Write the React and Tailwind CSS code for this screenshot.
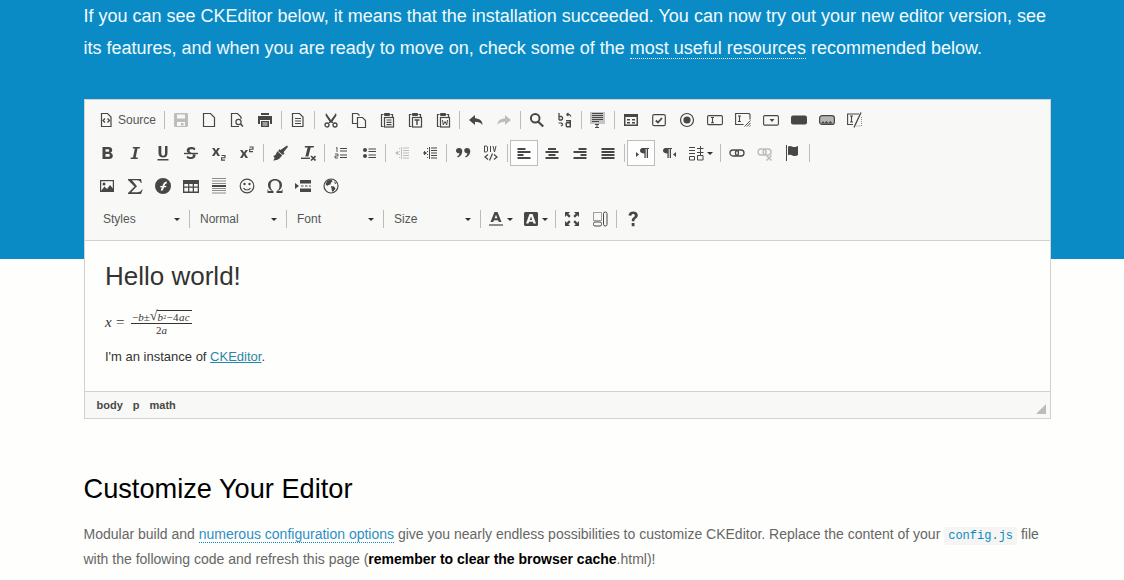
const Ic = ({ children, c = "#474747", w = 16, h = 16 }) => (
  <svg width={w} height={h} viewBox={`0 0 ${w} ${h}`} fill={c} stroke="none">
    {children}
  </svg>
);

const S = ({ d, c = "#474747", w = 1.2 }) => <path d={d} fill="none" stroke={c} strokeWidth={w} />;

const icons = {
  source: <><S d="M3.500 1.500h6l3.500 3.500v9.500h-9.500z" /><S d="M7 6.500l-2 2 2 2M9.500 6.500l2 2-2 2" w={1.300} /></>,
  save: <path fillRule="evenodd" d="M2 1h12l1 1v12l-1 1H2l-1-1V2zM4 2.500v4h8v-4zM4 10v4h8v-4zM8 11h2.500v2.500H8z" fill="#bdbdbd" />,
  newpage: <S d="M2.500 1.500h7l4 4v9h-11z" />,
  preview: <><S d="M10 14.500H2.500v-13h6l3.500 3.500v2" /><circle cx="9.500" cy="10" r="2.600" fill="none" stroke="#474747" strokeWidth="1.200" /><S d="M11.500 12l2.500 2.500" w={1.600} /></>,
  print: <path fillRule="evenodd" d="M4 1h8v2H4zM1 4h14v8h-2V8H3v4H1zM4 9h8v6H4zM5.500 10.500v1h5v-1zM5.500 12.500v1h5v-1z" />,
  templates: <><S d="M2.500 1.500h7l3.500 3.500v9.500H2.500z" /><S d="M5 6.500h6M5 9h6M5 11.500h6" /></>,
  cut: <><path d="M3 1l5 7 5-7 .5 2.500L9.500 9.500l1 1.500h-2L8 10l-.5 1h-2l1-1.500L2.500 3.500z" /><circle cx="4" cy="13" r="2" fill="none" stroke="#474747" strokeWidth="1.300" /><circle cx="12" cy="13" r="2" fill="none" stroke="#474747" strokeWidth="1.300" /></>,
  copy: <><S d="M6 11.500H1.500v-10h5l2 2" /><path d="M6.500 5.500h5l3 3v7h-8z" fill="#f8f8f6" stroke="#474747" strokeWidth="1.200" /></>,
  paste: <><S d="M4.500 2.500h-2v12h2" /><S d="M11.500 2.500h2v2.500" /><rect x="5" y="1" width="6" height="3" rx="1" /><rect x="5.500" y="5.500" width="9" height="9.500" fill="none" stroke="#474747" strokeWidth="1.200" /><S d="M7.500 8h5M7.500 10.300h5M7.500 12.600h5" /></>,
  pastetext: <><S d="M4.500 2.500h-2v12h2" /><S d="M11.500 2.500h2v2.500" /><rect x="5" y="1" width="6" height="3" rx="1" /><rect x="5.500" y="5.500" width="9" height="9.500" fill="none" stroke="#474747" strokeWidth="1.200" /><S d="M7.500 8h5M10 8v5" w={1.400} /></>,
  pasteword: <><S d="M4.500 2.500h-2v12h2" /><S d="M11.500 2.500h2v2.500" /><rect x="5" y="1" width="6" height="3" rx="1" /><rect x="5.500" y="5.500" width="9" height="9.500" fill="none" stroke="#474747" strokeWidth="1.200" /><S d="M7.500 8l.8 5 1.700-3.500 1.700 3.500.8-5" w={1} /></>,
  undo: <path d="M7 3L1 8l6 5v-3.200c3 0 5.500.6 7.500 3.200 0-4-2.500-6.500-7.500-6.800z" />,
  redo: <path d="M9 3l6 5-6 5v-3.200c-3 0-5.500.6-7.500 3.200 0-4 2.500-6.500 7.500-6.800z" fill="#bdbdbd" />,
  find: <><circle cx="6.200" cy="6.200" r="4.300" fill="none" stroke="#474747" strokeWidth="2" /><path d="M9.500 8.500l5.500 5.200-1.600 1.600L8 10z" /></>,
  replace: <><S d="M2 1v7M2 4.500h2.500l1 1v1.500l-1 1H2" w={1.300} /><S d="M9.500 2.500h3l1.500 2M9.500 2.500l2-1.500M9.500 2.500l2 1.500" /><S d="M1.500 11h3l1.500 1.500M6 12.500l-2 1.500M6 12.500l-2-1.500" /><path fillRule="evenodd" d="M9 8h5v7.500H9.500L8.500 14v-3l1-1h3V9.500H9zM10 11.500v2.500h2.500v-2.500z" /></>,
  selectall: <><rect x="0" y="0" width="15" height="12" fill="#c4c4c4" /><path d="M2 1h11v1H2zM2 3h11v1H2zM2 5h11v1H2zM2 7h11v1H2zM2 9h7v1H2z" /><path d="M5 12h4v1H7.500v2H9v1H5v-1h1.500v-2H5z" /></>,
  form: <path fillRule="evenodd" d="M1 2h14v12H1zM2.500 5v7.500h11V5zM4 7h3v1.500H4zM9 7h3v1.500H9zM4 10h3v1.500H4zM9 10h3v1.500H9z" />,
  checkbox: <><rect x="1.700" y="2.700" width="12.600" height="11" rx="1.500" fill="none" stroke="#474747" strokeWidth="1.200" /><S d="M4.800 8.500l2.200 2 4-4.500" w={1.800} /></>,
  radio: <><circle cx="8" cy="8" r="6.500" fill="none" stroke="#474747" strokeWidth="1.200" /><circle cx="8" cy="8" r="3.600" /></>,
  textfield: <><rect x=".6" y="3.600" width="14.800" height="9" rx="1.200" fill="none" stroke="#474747" strokeWidth="1.100" /><S d="M4 5.500h3M4 10.700h3M5.500 5.500v5.200" w={1.100} /></>,
  textarea: <><S d="M15 7.500V2.500l-1-1H.6v11h8" w={1.100} /><S d="M3 4h3M3 9.500h3M4.500 4v5.500" w={1.100} /><S d="M15.500 8.500l-6 6M15.500 11L12 14.500M15.500 13.500l-1 1" w={1} /></>,
  select: <><rect x=".6" y="3.600" width="14.800" height="9.500" rx="1.200" fill="none" stroke="#474747" strokeWidth="1.100" /><path d="M6.500 7h5L9 10z" /></>,
  button: <rect y="3.500" width="16" height="9" rx="2" />,
  imgbutton: <><rect x=".6" y="3.600" width="14.800" height="8.800" rx="2.500" fill="#b5b5b5" stroke="#474747" strokeWidth="1.200" /><path d="M2 11.500l2-2.500 1.500 2 2-2 2 2 2-2 2 2.500z" /></>,
  hidden: <><S d="M12 2H.6v10.500H6" w={1.100} /><S d="M3 4h3M3 10h3M4.500 4v6" w={1.100} /><S d="M14 .5L7 15.500" w={1.300} /><path d="M14.500 5v9H9" fill="none" stroke="#8c8c8c" strokeWidth="1" strokeDasharray="1 1" /></>,
  bold: <path fillRule="evenodd" d="M3.500 2h6c2.500 0 3.700 1.200 3.700 3 0 1.300-.7 2.200-1.800 2.700 1.500.4 2.400 1.500 2.400 3 0 2.100-1.500 3.300-4 3.300H3.500zM6.500 4.200v2.600h2.400c.9 0 1.300-.5 1.300-1.300s-.4-1.300-1.300-1.300zM6.500 9v2.800h2.800c1 0 1.500-.5 1.500-1.400S10.300 9 9.300 9z" />,
  italic: <path d="M6 2h7l-.3 1.500h-2.200L8.700 12.500h2.200l-.3 1.500H3.500l.3-1.500h2.200l1.800-9H5.700z" />,
  underline: <path fillRule="evenodd" d="M3.500 1h2.800v7c0 1.800.6 2.700 1.900 2.700S10 9.800 10 8V1h2.500v7c0 3.200-1.500 4.500-4.300 4.500S3.500 11.200 3.500 8zM2.500 14h11v1.400h-11z" />,
  strike: <><path d="M12.500 3.500c-1-1-2.500-1.500-4.300-1.500C5.500 2 3.700 3.200 3.700 5.300c0 1.200.5 2 1.600 2.600h3.500C7.200 7.300 6.500 6.700 6.500 5.700c0-.9.700-1.500 2-1.500 1.200 0 2.300.4 3 1.100zM3.500 12.500c1 1 2.700 1.500 4.500 1.500 2.800 0 4.500-1.300 4.500-3.500 0-.5-.1-1-.3-1.300H9.300c.4.400.5.700.5 1.200 0 1-.7 1.600-2 1.600-1.200 0-2.500-.5-3.300-1.300z" /><rect x="1" y="7.800" width="14" height="1.400" /></>,
  sub: <><path d="M1 3h2.400L5 5.500 6.600 3H9L6.400 6.800 9 11H6.600L5 8.300 3.300 11H1l2.600-4.200z" /><S d="M10.500 10.500h3.500v2.300h-3.400v2.300H14" w={1.100} /></>,
  sup: <><path d="M1 5h2.400L5 7.500 6.600 5H9L6.400 8.800 9 13H6.600L5 10.300 3.300 13H1l2.600-4.200z" /><S d="M10.500 2h3.500v2.300h-3.400v2.300H14" w={1.100} /></>,
  brush: <path d="M15 .5l1 1.300-4.500 5.500 1 1-1.500 1.700-5-4 1.500-1.800 1 .8zM5.200 6.200l5 4L8 13c-1.200 1.300-3.500 2.300-7 2.500 1.500-1.200 1.800-2.200 1.200-3.200-.3-.6-.7-1-1.200-1.200 1.700-.2 3-1.300 4.200-4.900z" />,
  removeformat: <><path d="M5 1h9l-.3 1.500h-3L8.400 11.500h-3L7.600 2.500h-2.900z" /><rect x="1" y="12.600" width="9" height="1.400" /><S d="M11 11l4.500 4.500M15.500 11L11 15.500" w={1.600} /></>,
  numlist: <><path d="M7 3h7v1.100H7zM7 5.500h7v1.100H7zM7 9.500h7v1.100H7zM7 12h7v1.100H7z" /><S d="M3 3l1-.5v4.500M2 9h3v2H2v2h3" w={.9} /></>,
  bullist: <><circle cx="4" cy="5" r="2" /><circle cx="4" cy="11" r="2" /><path d="M7.500 3.500h7.500v1.100H7.500zM7.500 6h7.500v1.100H7.500zM7.500 9.500h7.500v1.100H7.500zM7.500 12h7.500v1.100H7.500z" /></>,
  outdent: <g fill="#bdbdbd"><path d="M9 2.500h6v1H9zM9 5h6v1H9zM9 7.500h6v1H9zM9 10h6v1H9zM9 12.500h6v1H9zM7 2h1v12H7zM5 3h1v1H5zM5 6h1v1H5zM5 9h1v1H5zM5 12h1v1H5z" /><path d="M1 8l3-2.200v1.600h1v1.200H4v1.600z" /></g>,
  indent: <><path d="M9 2.500h6v1H9zM9 5h6v1H9zM9 7.500h6v1H9zM9 10h6v1H9zM9 12.500h6v1H9zM7 2h1v12H7zM5 3h1v1H5zM5 6h1v1H5zM5 9h1v1H5zM5 12h1v1H5z" /><path d="M5 8L2 5.800v1.600H1v1.200h1v1.600z" /></>,
  quote: <path d="M4 3c2 0 3.300 1.200 3.300 3.300 0 3-1.800 5.200-4.500 6.200l-.6-1c1.400-.8 2.200-1.800 2.300-3.200C2 8.300 1 7.200 1 5.700 1 4.100 2.200 3 4 3zM12 3c2 0 3.300 1.200 3.300 3.300 0 3-1.800 5.200-4.500 6.200l-.6-1c1.400-.8 2.200-1.800 2.300-3.200-2.200 0-3.200-1.100-3.200-2.600C9 4.100 10.200 3 12 3z" />,
  div: <><S d="M1.500 1h2l1 1v4l-1 1h-2zM7.500 1v6M10 1l1.500 6L13 1" w={1} /><S d="M5 9.500l-3 2.500 3 2.500M11 9.500l3 2.500-3 2.500M9.500 8.500l-3 7" w={1.200} /></>,
  left: <path d="M1.500 3h8v2h-8zM1.500 6h13v2h-13zM1.500 9h6v2h-6zM1.500 12h13v2h-13z" />,
  center: <path d="M4 3h8v2H4zM1.500 6h13v2h-13zM4.500 9h7v2h-7zM1.500 12h13v2h-13z" />,
  right: <path d="M6.500 3h8v2h-8zM1.500 6h13v2h-13zM8.500 9h6v2h-6zM1.500 12h13v2h-13z" />,
  justify: <path d="M1.500 3h13v2h-13zM1.500 6h13v2h-13zM1.500 9h13v2h-13zM1.500 12h13v2h-13z" />,
  ltr: <path d="M9 3h7v1h-1v9h-1.300V4h-1v9h-1.300V8.500C9 8.500 7 7.500 7 5.700S8.500 3 9 3zM3 7l3 2.500L3 12z" />,
  rtl: <path d="M4 3h7v1h-1v9H8.700V4h-1v9H6.400V8.500C4 8.500 2 7.500 2 5.700S3.500 3 4 3zM15 7l-3 2.500 3 2.500z" />,
  lang: <><S d="M1 2.500h6M1 5.500h6M1 8.500h6M1.500 11.500h5v3.500h-5z" w={1} /><S d="M9 3.500h6.500M9 7.500h6.500M12.500 1v9M9.500 10.500h5.500v4.500h-5.500z" w={1} /></>,
  link: <><rect x="1" y="5" width="8.500" height="6" rx="3" fill="none" stroke="#474747" strokeWidth="1.300" /><rect x="6.500" y="5" width="8.500" height="6" rx="3" fill="none" stroke="#474747" strokeWidth="1.300" /></>,
  unlink: <><rect x="1" y="4" width="8" height="6" rx="3" fill="none" stroke="#bdbdbd" strokeWidth="1.500" /><rect x="6" y="4" width="8" height="6" rx="3" fill="none" stroke="#bdbdbd" strokeWidth="1.500" /><S d="M9.500 10.500l5 5M14.500 10.500l-5 5" c="#bdbdbd" w={1.500} /></>,
  anchor: <><rect x="1" y="0" width="1" height="16" /><path d="M3 1.500c3-1.500 4 .5 6 .5 1.500 0 3-.5 4-1v9c-1 .8-2.500 1.200-4 1-2-.3-3-2-6-.7z" /></>,
  image: <><rect x="1.600" y="2.600" width="12.800" height="10.800" fill="none" stroke="#474747" strokeWidth="1.200" /><path d="M2 13l3.500-4.500L8 11l3-4 3 3.500V13z" /><circle cx="5" cy="6" r="1.500" /></>,
  sigma: <path d="M1 1h13l.8 4h-.9c-.6-1.700-1.700-2.700-4-2.700H5l5 6-5.800 6h6.300c2.300 0 3.500-.8 4.300-2.700h.9L14 16H1v-1l6.500-6.500L1 2z" />,
  mathjax: <path fillRule="evenodd" d="M8 0a8 8 0 1 1 0 16A8 8 0 0 1 8 0zM12 3.500C10 3.500 8.800 4.500 8 6.500L7.300 8H5.500l-.5 1.200h1.800L5.800 12.500c1 .5 2 0 2.500-1.300l.8-2h1.900l.5-1.200H9.500l.5-1.300c.3-.8.8-1 1.500-1z" />,
  table: <path fillRule="evenodd" d="M0 2h16v13H0zM1.300 6v2.500h3.800V6zM6.300 6v2.500h3.400V6zM11 6v2.500h3.700V6zM1.300 9.700v3.900h3.800V9.700zM6.300 9.700v3.900h3.400V9.700zM11 9.700v3.900h3.700V9.700z" />,
  hr: <><path d="M1 0h14v1H1zM1 2.500h14v1H1zM1 5h14v1H1zM1 12h14v1H1zM1 14.500h14v1H1zM1 10h14v1H1z" fill="#8c8c8c" /><rect x="1" y="7" width="14" height="2" /></>,
  smiley: <><circle cx="8" cy="8" r="6.800" fill="none" stroke="#474747" strokeWidth="1.200" /><circle cx="5.500" cy="6" r="1.200" /><circle cx="10.500" cy="6" r="1.200" /><S d="M4.500 10c1 1.500 2.200 2 3.500 2s2.500-.5 3.500-2" /></>,
  omega: <path d="M8 1c4 0 7 2.500 7 6 0 2.700-1.600 4.800-4 6h3.500l.5-1.500h.5v3.500h-6v-1.800c2-1 3-3 3-5.700C12.500 4.200 10.800 2.500 8 2.500S3.500 4.200 3.500 7.500c0 2.700 1 4.700 3 5.700V15H.5v-3.500H1l.5 1.500H5C2.600 11.800 1 9.700 1 7c0-3.500 3-6 7-6z" />,
  pagebreak: <path d="M5 2h11v3.500H5zM5 10.500h11V14H5zM6 7.500h2.500v1H6zM10 7.500h2.500v1H10zM14 7.500h2v1h-2zM0 5l4 3-4 3z" />,
  iframe: <><circle cx="8" cy="8" r="7" fill="none" stroke="#474747" strokeWidth="1.200" /><path d="M4.500 2.500l4-1 1 2-1.500 1-.5 2-2 .5-1.500 1-1.500-2zM8 8l3 .5 1.500 2-2.500 3.500-1-1-.5-2.500zM11 3l2.500 2.500-1.500.5z" /></>,
  maximize: <path d="M1 1h5L4.300 2.700 6.700 5 5 6.700 2.700 4.300 1 6zM15 1h-5l1.700 1.700L9.300 5 11 6.700l2.300-2.400L15 6zM1 15h5l-1.700-1.700 2.400-2.300L5 9.300 2.700 11.700 1 10zM15 15h-5l1.700-1.700L9.300 11l1.700-1.700 2.300 2.400L15 10z" />,
  blocks: <><path d="M1.500 1.500h8v8h-8z" fill="none" stroke="#474747" strokeWidth="1" strokeDasharray="1 1" /><rect x="1.500" y="11" width="8" height="4" rx="1.500" fill="none" stroke="#474747" strokeWidth="1" /><rect x="11.500" y="1" width="3.500" height="14" rx="1.700" fill="none" stroke="#474747" strokeWidth="1" /></>,
  about: <path d="M3.500 4.500C3.800 2 5.500.5 8.300.5c2.700 0 4.500 1.500 4.500 3.700 0 1.700-.9 2.600-2.200 3.500-.8.600-1.100 1-1.100 2v.5H6.800v-.7c0-1.500.5-2.300 1.600-3.100.9-.7 1.400-1.100 1.400-2 0-.9-.6-1.500-1.600-1.500s-1.700.6-1.900 1.800zM6.700 12h2.800v3.200H6.700z" />,
  textcolor: <><path fillRule="evenodd" d="M6.500 1h3l4 10h-2.800l-.6-1.800H5.900L5.300 11H2.500zM8 3.700L6.600 7.300h2.800z" /><rect x="1" y="13" width="14" height="2" fill="#8c8c8c" /></>,
  bgcolor: <path fillRule="evenodd" d="M2 1h12l1 1v12l-1 1H2l-1-1V2zM6.500 3L3 12.500h2.500l.6-1.800h3.800l.6 1.800h2.500L9.500 3zM8 5.600l1.200 3.300H6.800z" />,
};

const Btn = ({ n, on }) => (
  <div className={on ? "w-7 h-[26px] flex items-center justify-center bg-[#fefefe] border border-[#bcbcbc]" : "w-7 h-[26px] flex items-center justify-center"}>
    <Ic>{icons[n]}</Ic>
  </div>
);

const Sep = () => <div className="w-px h-[18px] mx-[2px] bg-[#bcbcbc]" />;

const Arrow = () => <div className="w-0 h-0 border-x-[3px] border-x-transparent border-t-[3px] border-t-[#2f2f2f]" />;

const ColorBtn = ({ n }) => (
  <div className="flex items-center h-[26px] w-[35px] pl-[5px]">
    <Ic>{icons[n]}</Ic>
    <div className="ml-[3px]"><Arrow /></div>
  </div>
);

const Row = ({ items }) => (
  <div className="flex items-center h-[26px]">
    {items.map((n, i) => {
      if (n === "|") return <Sep key={i} />;
      if (n === "lang") return <ColorBtn key={i} n={n} />;
      return <Btn key={i} n={n} on={n === "left" || n === "ltr"} />;
    })}
  </div>
);

const Combo = ({ label, cls }) => (
  <div className={`flex items-center justify-between h-[26px] pr-[7px] ${cls}`}>
    <span className="text-[12px] text-[#555]">{label}</span>
    <Arrow />
  </div>
);

function Formula() {
  return (
    <div className="flex items-center h-[27px] text-[#333] font-['Liberation_Serif',serif]">
      <span className="italic text-[15px] w-[11px]">x</span>
      <span className="text-[15px] w-[15px]">=</span>
      <div className="flex flex-col items-center w-[61px] leading-none">
        <div className="flex items-end h-[15px] border-b border-[#333] w-full text-[11px] whitespace-nowrap">
          <span className="ml-[1px]">−<i>b</i>±</span>
          <span className="text-[14px] leading-[14px]">√</span>
          <span className="border-t border-[#333] leading-[12px] grow tracking-[0.3px]">
            <i>b</i><span className="text-[6px] align-top">2</span>−4<i>ac</i>
          </span>
        </div>
        <div className="text-[11px] h-[12px] leading-[12px]">2<i>a</i></div>
      </div>
    </div>
  );
}

export default function App() {
  return (
    <div className="w-[1124px] h-[580px] overflow-hidden relative bg-[#fefefc] font-['Liberation_Sans',sans-serif]">
      <div className="bg-[#0a8bc6] h-[259px] pl-[83.500px] text-[#f2fafd] text-[18px] leading-[32px]">
        <p className="w-[975px]">
          If you can see CKEditor below, it means that the installation succeeded. You can now try out your new editor version, see its features, and when you are ready to move on, check some of the <span className="border-b border-dotted border-white">most useful resources</span> recommended below.
        </p>
      </div>

      <div className="absolute left-[84px] top-[99px] w-[967px] h-[320px] border border-[#d1d1d1] flex flex-col">
        <div className="h-[141px] shrink-0 bg-[#f8f8f6] border-b border-[#d1d1d1] pl-[8px] pt-[7px] flex flex-col gap-[7px]">
          <div className="flex items-center h-[26px]">
            <div className="w-[69px] h-[26px] flex items-center pl-[5px] gap-[1px]">
              <Ic>{icons.source}</Ic>
              <span className="text-[12px] text-[#555] ml-[3px]">Source</span>
            </div>
            <Sep />
            <Row items={["save", "newpage", "preview", "print", "|", "templates", "|", "cut", "copy", "paste", "pastetext", "pasteword", "|", "undo", "redo", "|", "find", "replace", "|", "selectall", "|", "form", "checkbox", "radio", "textfield", "textarea", "select", "button", "imgbutton", "hidden"]} />
          </div>
          <Row items={["bold", "italic", "underline", "strike", "sub", "sup", "|", "brush", "removeformat", "|", "numlist", "bullist", "|", "outdent", "indent", "|", "quote", "div", "|", "left", "center", "right", "justify", "|", "ltr", "rtl", "lang", "|", "link", "unlink", "anchor", "|"]} />
          <Row items={["image", "sigma", "mathjax", "table", "hr", "smiley", "omega", "pagebreak", "iframe"]} />
          <div className="flex items-center h-[26px]">
            <Combo label="Styles" cls="w-[94px] pl-[10px]" />
            <Sep />
            <Combo label="Normal" cls="w-[92px] pl-[8px]" />
            <Sep />
            <Combo label="Font" cls="w-[92px] pl-[8px]" />
            <Sep />
            <Combo label="Size" cls="w-[92px] pl-[8px]" />
            <Sep />
            <ColorBtn n="textcolor" />
            <ColorBtn n="bgcolor" />
            <Sep />
            <Btn n="maximize" />
            <Btn n="blocks" />
            <Sep />
            <Btn n="about" />
          </div>
        </div>

        <div className="grow bg-[#fefefc] pl-[20px] text-[#333]">
          <h1 className="text-[26px] leading-[32px] mt-[19px]">Hello world!</h1>
          <div className="mt-[17px]"><Formula /></div>
          <p className="text-[13px] leading-[20px] mt-[11px]">
            I'm an instance of <a className="underline text-[#2a87a8]">CKEditor</a>.
          </p>
        </div>

        <div className="h-[27px] shrink-0 bg-[#f8f8f6] border-t border-[#d1d1d1] flex items-center pl-[11.500px] gap-[10px] text-[11px] font-bold text-[#484848] relative">
          <span>body</span>
          <span>p</span>
          <span>math</span>
          <div className="absolute right-[4px] bottom-[4px] w-0 h-0 border-l-[10px] border-l-transparent border-b-[10px] border-b-[#bcbcbc]" />
        </div>
      </div>

      <div className="pl-[83.500px]">
        <h2 className="text-[27.200px] leading-[36px] text-black mt-[212px]">Customize Your Editor</h2>
        <p className="text-[14px] leading-[25px] text-[#666] mt-[15px] w-[960px]">
          Modular build and <a className="text-[#2f8fc4] border-b border-dotted border-[#0a8bc6]">numerous configuration options</a> give you nearly endless possibilities to customize CKEditor. Replace the content of your <code className="font-['Liberation_Mono',monospace] text-[12px] leading-none text-[#0a8bc6] bg-[#f5f5f3] px-[4px] py-[2px] rounded-[3px]">config.js</code> file with the following code and refresh this page (<strong className="text-black">remember to clear the browser cache</strong>.html)!
        </p>
      </div>
    </div>
  );
}
